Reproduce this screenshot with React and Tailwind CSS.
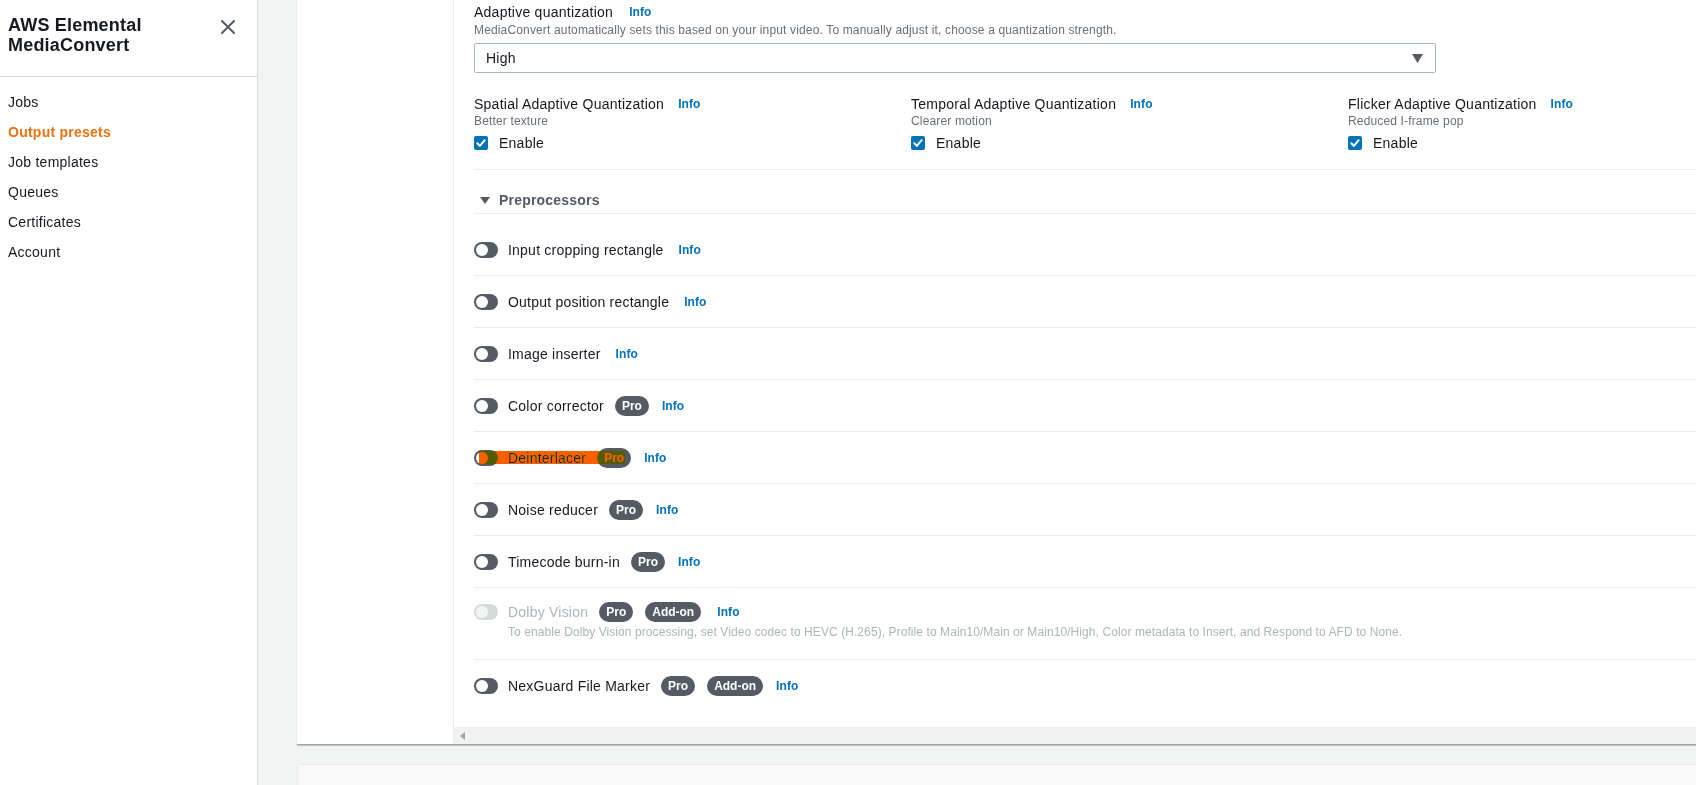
import React from "react";

const font = { fontFamily: '"Liberation Sans", Arial, sans-serif' };

function Info({ className = "" }) {
  return <span className={"text-[12px] font-bold text-[#0073bb] leading-[16px] tracking-[0.1px] " + className}>Info</span>;
}

function Badge({ children }) {
  return (
    <span className="h-[20px] px-[7px] rounded-full bg-[#545b64] text-white text-[12px] font-bold flex items-center leading-none">
      {children}
    </span>
  );
}

function Toggle({ disabled }) {
  return (
    <span
      className={
        "w-[24px] h-[16px] rounded-full flex items-center shrink-0 " +
        (disabled ? "bg-[#d5dbdb]" : "bg-[#545b64]")
      }
    >
      <span className={"w-[12px] h-[12px] rounded-full ml-[2px] " + (disabled ? "bg-[#f2f3f3]" : "bg-white")} />
    </span>
  );
}

function Checkbox() {
  return (
    <svg width="14" height="14" viewBox="0 0 14 14" className="shrink-0">
      <rect x="0" y="0" width="14" height="14" rx="2" fill="#0073bb" />
      <path d="M3.3 7.3 L5.9 9.9 L10.7 4.2" stroke="#fff" strokeWidth="2" fill="none" strokeLinecap="round" strokeLinejoin="round" />
    </svg>
  );
}

function Row({ label, badges = [], last, overlay }) {
  return (
    <div className={"relative h-[52px] flex items-center " + (last ? "" : "border-b border-[#eaeded]")}>
      <Toggle />
      <span className="ml-[10px] text-[14px] text-[#16191f] leading-[20px] tracking-[0.22px]">{label}</span>
      {badges.length > 0 && (
        <span className="ml-[11px] flex items-center gap-[12px]">
          {badges.map((b) => (
            <Badge key={b}>{b}</Badge>
          ))}
        </span>
      )}
      <Info className={badges.length ? "ml-[13px]" : "ml-[15px]"} />
      {overlay && (
        <span className="absolute left-[5px] top-[19px] h-[13px] w-[146px] bg-[#ff5f00] mix-blend-darken" />
      )}
    </div>
  );
}

function Column({ title, sub }) {
  return (
    <div className="flex flex-col">
      <div className="flex items-center h-[18px] mt-[1px]">
        <span className="text-[14px] text-[#16191f] tracking-[0.25px]">{title}</span>
        <Info className="ml-[14px]" />
      </div>
      <div className="text-[12px] leading-[16px] text-[#687078] tracking-[0.15px]">{sub}</div>
      <div className="flex items-center h-[20px] mt-[4px]">
        <Checkbox />
        <span className="ml-[11px] text-[14px] text-[#16191f] tracking-[0.25px]">Enable</span>
      </div>
    </div>
  );
}

export default function App() {
  const nav = ["Jobs", "Output presets", "Job templates", "Queues", "Certificates", "Account"];
  return (
    <div style={font} className="w-[1696px] h-[785px] flex overflow-hidden bg-[#f2f3f3]">
      <aside className="w-[258px] shrink-0 h-full bg-white border-r border-[#d5dbdb]">
        <div className="h-[77px] border-b border-[#d5dbdb] flex justify-between pl-[8px] pr-[22px] pt-[15px]">
          <div className="text-[18px] leading-[20px] font-bold text-[#16191f] tracking-[0.2px]">
            AWS Elemental
            <br />
            MediaConvert
          </div>
          <svg width="14" height="14" viewBox="0 0 14 14" className="mt-[5px]">
            <path d="M1 1 L13 13 M13 1 L1 13" stroke="#545b64" strokeWidth="2" strokeLinecap="round" />
          </svg>
        </div>
        <nav className="pt-[10px]">
          {nav.map((n) => (
            <div
              key={n}
              className={
                "h-[30px] flex items-center px-[8px] text-[14px] tracking-[0.25px] " +
                (n === "Output presets" ? "text-[#ec7211] font-bold" : "text-[#16191f]")
              }
            >
              {n}
            </div>
          ))}
        </nav>
      </aside>

      <main className="flex-1 min-w-0 flex flex-col pl-[39px]">
        <div className="h-[745px] shrink-0 bg-white flex border-b border-[#98a4a5] shadow-[0_1px_1px_0_rgba(0,28,36,0.2)]">
          <div className="w-[156px] shrink-0" />
          <div className="flex-1 min-w-0 border-l border-[#eaeded] flex flex-col">
            <div className="flex-1 pl-[20px] overflow-hidden pt-[2px]">
              <div className="flex items-center h-[20px]">
                <span className="text-[14px] text-[#16191f] tracking-[0.25px]">Adaptive quantization</span>
                <Info className="ml-[16px]" />
              </div>
              <div className="text-[12px] leading-[16px] text-[#687078] tracking-[0.15px]">
                MediaConvert automatically sets this based on your input video. To manually adjust it, choose a quantization strength.
              </div>
              <div className="mt-[5px] h-[30px] w-[962px] border border-[#aab7b8] rounded-[2px] flex items-center justify-between pl-[11px] pr-[12px]">
                <span className="text-[14px] text-[#16191f] tracking-[0.25px]">High</span>
                <svg width="11" height="9" viewBox="0 0 11 9">
                  <path d="M0 0 H11 L5.5 9 Z" fill="#545b64" />
                </svg>
              </div>

              <div className="mt-[21px] pb-[16px] border-b border-[#eaeded] grid grid-cols-[437px_437px_1fr]">
                <Column title="Spatial Adaptive Quantization" sub="Better texture" />
                <Column title="Temporal Adaptive Quantization" sub="Clearer motion" />
                <Column title="Flicker Adaptive Quantization" sub="Reduced I-frame pop" />
              </div>

              <div className="pt-[21px] pb-[3px] border-b border-[#eaeded] flex items-center h-[44px]">
                <svg width="10" height="8" viewBox="0 0 10 8" className="ml-[6px]">
                  <path d="M0 0 H10 L5 7 Z" fill="#545b64" />
                </svg>
                <span className="ml-[9px] text-[14px] font-bold text-[#545b64] tracking-[0.2px]">Preprocessors</span>
              </div>

              <div className="pt-[10px]">
                <Row label="Input cropping rectangle" />
                <Row label="Output position rectangle" />
                <Row label="Image inserter" />
                <Row label="Color corrector" badges={["Pro"]} />
                <Row label="Deinterlacer" badges={["Pro"]} overlay />
                <Row label="Noise reducer" badges={["Pro"]} />
                <Row label="Timecode burn-in" badges={["Pro"]} />
                <div className="h-[72px] border-b border-[#eaeded] pt-[14px]">
                  <div className="flex items-center h-[20px]">
                    <Toggle disabled />
                    <span className="ml-[10px] text-[14px] text-[#aab7b8] tracking-[0.22px]">Dolby Vision</span>
                    <span className="ml-[11px] flex items-center gap-[12px]">
                      <Badge>Pro</Badge>
                      <Badge>Add-on</Badge>
                    </span>
                    <Info className="ml-[16px]" />
                  </div>
                  <div className="mt-[2px] ml-[34px] text-[12px] leading-[16px] text-[#aab7b8] tracking-[0.08px]">
                    To enable Dolby Vision processing, set Video codec to HEVC (H.265), Profile to Main10/Main or Main10/High, Color metadata to Insert, and Respond to AFD to None.
                  </div>
                </div>
                <Row label="NexGuard File Marker" badges={["Pro", "Add-on"]} last />
              </div>
            </div>
            <div className="h-[17px] shrink-0 bg-[#f1f1f1] flex items-center pl-[6px]">
              <svg width="5" height="8" viewBox="0 0 5 8">
                <path d="M5 0 V8 L0 4 Z" fill="#a3a3a3" />
              </svg>
            </div>
          </div>
        </div>
        <div className="mt-[19px] flex-1 bg-[#fafafa] border-t border-l border-[#eaeded]" />
      </main>
    </div>
  );
}
